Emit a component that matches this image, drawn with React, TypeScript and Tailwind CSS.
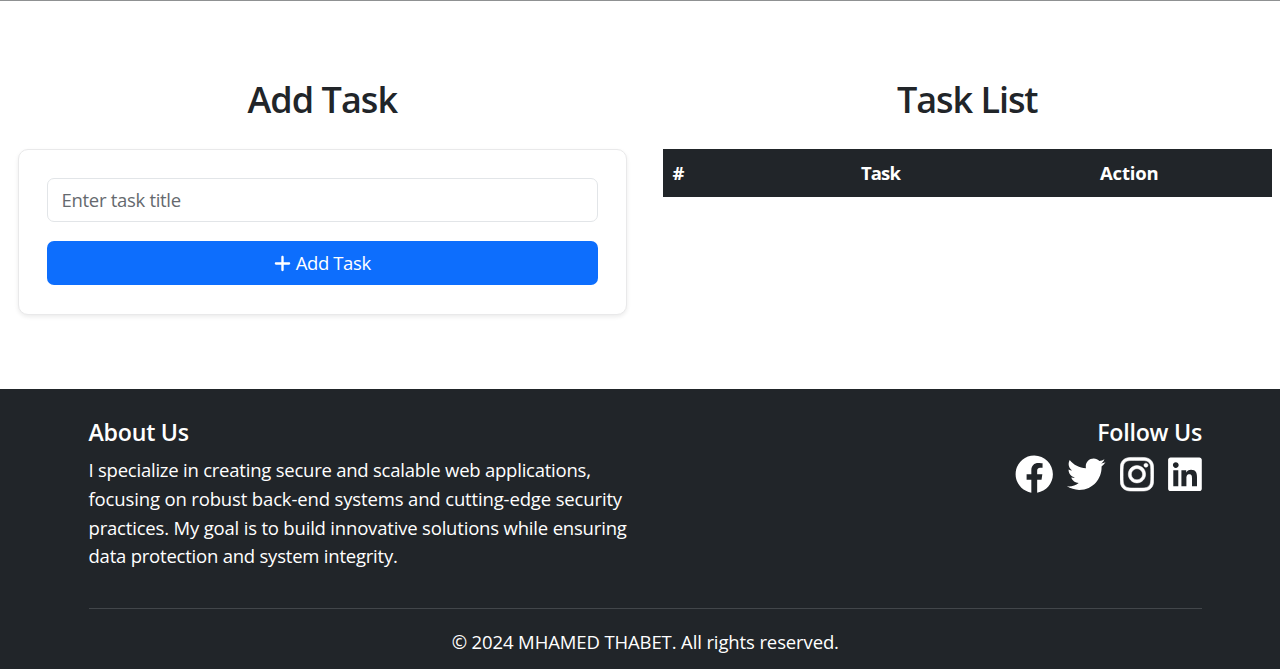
import { FaPlus } from "react-icons/fa6";
import { FaFacebook, FaTwitter, FaInstagram, FaLinkedin } from "react-icons/fa";

const paragraph = [
  { text: "I specialize in creating secure and scalable web applications,", track: "tracking-[-0.23px]" },
  { text: "focusing on robust back-end systems and cutting-edge security", track: "tracking-[-0.145px]" },
  { text: "practices. My goal is to build innovative solutions while ensuring", track: "tracking-[-0.185px]" },
  { text: "data protection and system integrity.", track: "tracking-[-0.22px]" },
];

function AddTask() {
  return (
    <section className="w-[609.5px]">
      <h2 className="mb-[26px] text-center text-[36px] leading-[46px] font-semibold tracking-[-0.95px]">
        <span>Add Task</span>
      </h2>
      <form
        className="flex h-[166px] flex-col gap-[19px] rounded-[10px] border border-[#e9e9ea] bg-white px-7 pt-7 shadow-[0_2px_4px_rgba(0,0,0,0.08)]"
        onSubmit={(e) => e.preventDefault()}
      >
        <input
          className="h-11 w-full rounded-[7px] border border-[#e2e5e8] px-[14px] pb-[2px] text-[18.5px] tracking-[-0.3px] outline-none placeholder:text-[#65696e]"
          placeholder="Enter task title"
        />
        <button className="flex h-11 w-full items-center justify-center gap-[5px] rounded-[7px] bg-[#0d6efd] text-[18.5px] tracking-[-0.4px] text-white">
          <FaPlus className="h-[19px] w-[17px]" />
          <span>Add Task</span>
        </button>
      </form>
    </section>
  );
}

function TaskList() {
  return (
    <section className="w-[609.5px]">
      <h2 className="mb-[26px] text-center text-[36px] leading-[46px] font-semibold tracking-[-1.05px]">
        <span>Task List</span>
      </h2>
      <div className="flex h-12 items-center bg-[#212529] text-[18.5px] font-bold text-white">
        <span className="w-[198.5px] pl-[10px]">#</span>
        <span className="w-[239px] tracking-[-0.9px]">Task</span>
        <span className="tracking-[-0.2px]">Action</span>
      </div>
    </section>
  );
}

export default function App() {
  return (
    <div className="flex h-[669px] w-full flex-col overflow-hidden border-t border-[#8f9192] bg-white font-['Open_Sans','Noto_Sans',sans-serif] text-[#212529]">
      <main className="flex h-[388px] shrink-0 gap-[35.5px] pt-[76px] pl-[17.5px]">
        <AddTask />
        <TaskList />
      </main>
      <footer className="flex-1 bg-[#212529] pr-[78px] pl-[88.5px] text-white">
        <div className="flex h-[220px] justify-between border-b border-[#42464a] pt-[28.4px]">
          <div>
            <h5 className="mb-[9px] text-[23.2px] leading-[30px] font-semibold tracking-[-0.25px]">
              <span>About Us</span>
            </h5>
            {paragraph.map((line) => (
              <p key={line.text} className="h-[28.6px] text-[18.5px] leading-[28.6px] whitespace-nowrap">
                <span className={line.track}>{line.text}</span>
              </p>
            ))}
          </div>
          <div className="flex flex-col items-end">
            <h5 className="text-[23.2px] leading-[30px] font-semibold tracking-[-0.25px]">
              <span>Follow Us</span>
            </h5>
            <div className="mt-[8px] flex gap-[14.2px]">
              <FaFacebook className="h-[38.5px] w-[38.5px]" />
              <FaTwitter className="h-[38.5px] w-[38.5px]" />
              <FaInstagram className="h-[38.5px] w-[33.9px]" stroke="white" strokeWidth={7} />
              <FaLinkedin className="h-[38.5px] w-[33.9px]" />
            </div>
          </div>
        </div>
        <p className="mt-[19px] text-center text-[18.5px] leading-[28.6px]">
          <span className="tracking-[-0.12px]">© 2024 MHAMED THABET. All rights reserved.</span>
        </p>
      </footer>
    </div>
  );
}
